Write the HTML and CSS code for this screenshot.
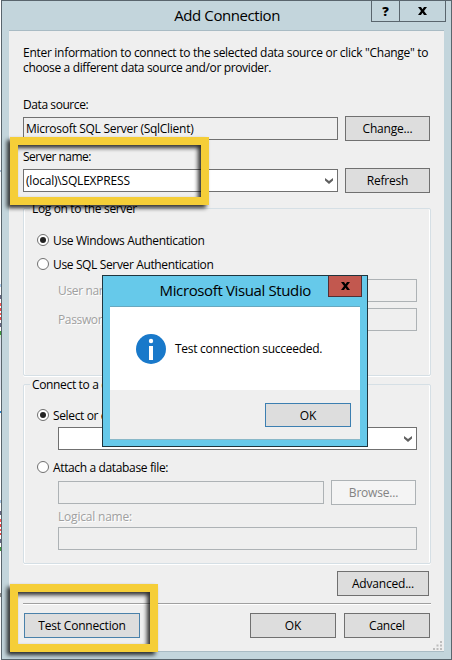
FILE: index.html
```html
<!DOCTYPE html>
<html lang="en">
<head>
<meta charset="utf-8">
<title>Add Connection</title>
<link rel="stylesheet" href="styles.css">
</head>
<body>
<main class="window">
  <header class="titlebar">
    <h1 class="title">Add Connection</h1>
    <div class="caption-buttons">
      <button class="caption help">?</button>
      <button class="caption close"><svg width="9" height="8" viewBox="0 0 9 8"><path d="M0 0h3l1.500 2.200L6 0h3L6 4l3 4H6L4.500 5.800 3 8H0l3-4z"/></svg></button>
    </div>
  </header>
  <section class="client">
    <p class="intro"><span class="intro-first">Enter information to connect to the selected data source or click "Change" to</span><br><span class="intro-second">choose a different data source and/or provider.</span></p>
    <div class="label source-label">Data source:</div>
    <div class="row">
      <div class="field main-field readonly">Microsoft SQL Server (SqlClient)</div>
      <button class="btn">Change...</button>
    </div>
    <div class="label server-label">Server name:</div>
    <div class="row">
      <div class="field main-field combo"><span class="server-value">(local)\SQLEXPRESS</span><svg class="chevron" width="8" height="6" viewBox="0 0 8 6"><path d="M0 0l4 3 4-3v2.500L4 6 0 2.500z"/></svg></div>
      <button class="btn">Refresh</button>
    </div>
    <fieldset class="group logon">
      <legend>Log on to the server</legend>
      <div class="radio"><i class="dot on"></i><span>Use Windows Authentication</span></div>
      <div class="radio second"><i class="dot"></i><span>Use SQL Server Authentication</span></div>
      <div class="credential"><span class="muted">User name:</span><div class="field disabled"></div></div>
      <div class="credential"><span class="muted">Password:</span><div class="field disabled"></div></div>
    </fieldset>
    <fieldset class="group database">
      <legend>Connect to a database</legend>
      <div class="radio"><i class="dot on"></i><span>Select or enter a database name:</span></div>
      <div class="field combo indent"><span></span><svg class="chevron" width="8" height="6" viewBox="0 0 8 6"><path d="M0 0l4 3 4-3v2.500L4 6 0 2.500z"/></svg></div>
      <div class="radio attach"><i class="dot"></i><span>Attach a database file:</span></div>
      <div class="row indent file-row"><div class="field disabled"></div><button class="btn" disabled>Browse...</button></div>
      <div class="label muted indent logical">Logical name:</div>
      <div class="field disabled indent"></div>
    </fieldset>
    <button class="btn advanced">Advanced...</button>
    <hr>
    <footer class="actions">
      <button class="btn test">Test Connection</button>
      <button class="btn wide">OK</button>
      <button class="btn wide">Cancel</button>
    </footer>
    <svg class="grip" width="9" height="9" viewBox="0 0 9 9"><path d="M7 0h2v2H7zM7 3.500h2v2H7zM3.500 3.500h2v2h-2zM7 7h2v2H7zM3.500 7h2v2h-2zM0 7h2v2H0z"/></svg>
  </section>
</main>

<section class="message">
  <header class="message-title"><h2>Microsoft Visual Studio</h2><button class="message-close"><svg width="9" height="8" viewBox="0 0 9 8"><path d="M0 0h3l1.500 2.200L6 0h3L6 4l3 4H6L4.500 5.800 3 8H0l3-4z"/></svg></button></header>
  <div class="message-client">
    <div class="message-body">
      <svg width="30" height="30" viewBox="0 0 30 30"><circle cx="15" cy="15" r="15" fill="#1979ca"/><circle cx="15" cy="7" r="2.200" fill="#fff"/><path fill="#fff" d="M13 12h4v14h-4z"/></svg>
      <span>Test connection succeeded.</span>
    </div>
    <div class="message-actions"><button class="btn wide focus">OK</button></div>
  </div>
</section>
<div class="highlight highlight-server"></div>
<div class="highlight highlight-test"></div>
</body>
</html>
```
FILE: styles.css
```css
* { box-sizing: border-box; }
body {
  margin: 0;
  width: 452px;
  height: 660px;
  overflow: hidden;
  position: relative;
  padding-left: 1px;
  font: 12px/15px "Open Sans", "Noto Sans", sans-serif;
  letter-spacing: -0.2px;
  color: #000;
  background: linear-gradient(#fff 0 170px, #aebfd4 170px 172px, #fff 172px 284px, #b3d0ef 284px 287px, #fff 287px 295px, #666783 295px 299px, #fff 299px 303px, #f55 303px 306px, #fff 306px 308px, #e44 308px 311px, #fff 311px 313px, #f55 313px 315px, #fff 315px 317px, #e44 317px 320px, #fff 320px 323px, #666783 323px 327px, #fff 327px 331px, #3a9a3a 331px 335px, #cdebcd 335px 338px, #dde2ed 338px 390px, #fff 390px 411px, #2d88d0 411px 413px, #fff 413px 500px, #aac9e8 500px 503px, #fff 503px 511px, #666783 511px 515px, #fff 515px 519px, #f55 519px 522px, #fff 522px 524px, #e44 524px 527px, #fff 527px 529px, #f55 529px 531px, #fff 531px 533px, #e44 533px 535px, #fff 535px 539px, #666783 539px 543px, #fff 543px 547px, #3a9a3a 547px 551px, #fff 551px 593px, #888 593px 597px, #fff 597px);
}
button { font: inherit; letter-spacing: inherit; color: inherit; padding: 0; border-radius: 0; }
.window { width: 451px; height: 660px; border: 1px solid #59656d; background: #c3d5dc; }
.titlebar { height: 29px; display: flex; justify-content: flex-end; }
.title { margin: 4px 91px 0 0; font-size: 15px; line-height: 20px; font-weight: 400; letter-spacing: -0.420px; }
.caption-buttons { display: flex; margin-right: 5px; height: 21px; border: 1px solid #59656d; border-top: 0; }
.caption { border: 0; background: transparent; display: flex; align-items: center; justify-content: center; }
.help { width: 28px; border-right: 1px solid #59656d; font-size: 13px; font-weight: 800; }
.close { width: 45px; }
.client { margin: 0 7px; height: 622px; padding: 14px 0 0 14px; background: #efefef; border-top: 1px solid #a9bbc4; border-bottom: 1px solid #a9bbc4; position: relative; }
.intro { margin: 0; white-space: nowrap; }
.intro-first { letter-spacing: -0.290px; }
.intro-second { letter-spacing: -0.360px; }
.label { height: 15px; }
.source-label { margin: 22px 0 4px; letter-spacing: -0.420px; }
.server-label { margin: 8px 0 4px; letter-spacing: -0.500px; }
.row { display: flex; align-items: center; gap: 7px; height: 25px; }
.field { height: 23px; padding: 0 3px 0 2px; border: 1px solid #707070; display: flex; align-items: center; background: #fff; white-space: nowrap; }
.main-field { width: 315px; }
.readonly { background: #efefef; letter-spacing: -0.280px; }
.disabled { background: #efefef; border-color: #adb2b5; }
.combo { justify-content: space-between; }
.chevron { fill: #606060; margin-right: 1px; }
.btn { width: 85px; height: 25px; border: 1px solid #707070; background: #ddd; white-space: nowrap; }
.btn:disabled { background: #f4f4f4; border-color: #adb2b5; color: #838383; }
.group { margin: 0; width: 408px; min-width: 0; border: 1px solid #d5dfe5; border-radius: 2px; box-shadow: 0 1px #fff, inset 1px 0 #fff, inset -1px 0 #fff; padding: 0 13px; }
.group legend { padding: 0 2px; margin-left: -7px; height: 15px; white-space: nowrap; letter-spacing: -0.350px; }
.logon { margin-top: 8px; height: 175px; padding-top: 16px; }
.database { margin-top: 1px; height: 187px; padding-top: 15px; }
.radio { display: flex; align-items: center; gap: 4px; height: 16px; white-space: nowrap; letter-spacing: -0.360px; }
.radio span { padding-top: 1px; }
.second { margin-top: 8px; }
.dot { width: 12px; height: 12px; border: 1px solid #707070; border-radius: 50%; background: #fff; display: grid; place-items: center; }
.on::after { content: ""; width: 6px; height: 6px; border-radius: 50%; background: #222; }
.muted { color: #a0a0a0; text-shadow: 1px 1px #fff; }
.credential { display: flex; align-items: center; justify-content: space-between; margin: 6px 0 0 21px; letter-spacing: -0.350px; }
.second + .credential { margin-top: 7px; }
.credential .field { width: 276px; }
.indent { margin-left: 21px; }
.database > .field { width: 359px; }
.database > .combo { margin-top: 4px; }
.attach { margin-top: 9px; }
.file-row { margin-top: 5px; }
.file-row .field { width: 266px; }
.logical { margin-top: 4px; margin-bottom: 3px; }
.advanced { display: block; width: 92px; margin: 7px 0 0 314px; }
hr { width: 408px; height: 2px; margin: 7px 0 8px; border: 0; border-top: 1px solid #a0a0a0; border-bottom: 1px solid #fff; }
.actions { display: flex; gap: 8px; padding-left: 1px; }
.test { width: 116px; margin-right: 102px; border-color: #4a81aa; }
.wide { width: 86px; }
.grip { position: absolute; right: 2px; bottom: 1px; fill: #bdbdbd; }
.message { position: absolute; left: 102px; top: 275px; width: 266px; height: 172px; border: 1px solid #1f353e; background: #66c9ea; }
.message-title { height: 30px; display: flex; justify-content: flex-end; align-items: flex-start; }
.message h2 { margin: 4px 17px 0 0; font-size: 15px; line-height: 20px; font-weight: 400; letter-spacing: -0.370px; white-space: nowrap; }
.message-close { width: 34px; height: 21px; margin-right: 5px; border: 1px solid #522f35; border-top: 0; background: #c2584f; display: grid; place-items: center; }
.message-client { margin: 0 7px; height: 134px; background: #efefef; border-top: 1px solid #68a8bf; border-bottom: 1px solid #8ab8c8; }
.message-body { height: 83px; padding-left: 26px; display: flex; align-items: center; gap: 9px; background: #fff; white-space: nowrap; letter-spacing: -0.270px; }
.message-actions { display: flex; justify-content: flex-end; padding: 13px 9px 0 0; }
.focus { height: 24px; border-color: #3c7fb1; }
.highlight { position: absolute; left: 10px; height: 68px; border: 8px solid #f5ce38; filter: drop-shadow(-3px 3px 2px rgba(0, 0, 0, .8)); }
.highlight-server { top: 137px; width: 199px; }
.highlight-test { top: 584px; width: 148px; }
```
